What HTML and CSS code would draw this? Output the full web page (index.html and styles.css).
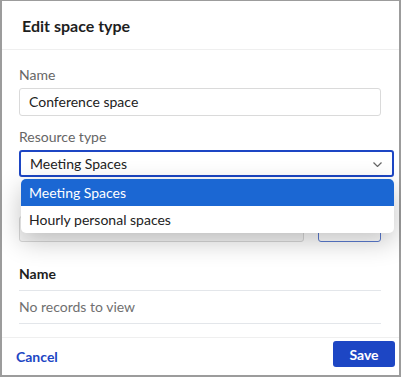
FILE: index.html
```html
<!DOCTYPE html>
<html lang="en">
<head>
    <meta charset="UTF-8">
    <meta name="viewport" content="width=device-width, initial-scale=1.0">
    <title>Edit space type</title>
    <link rel="stylesheet" href="styles.css">
</head>
<body>
    <div class="dialog">
        <div class="dialog-header">
            <h1 class="dialog-title">Edit space type</h1>
        </div>

        <div class="dialog-body">
            <div class="form-group">
                <label class="field-label">Name</label>
                <div class="text-input">Conference space</div>
            </div>

            <div class="form-group">
                <label class="field-label">Resource type</label>
                <div class="select-wrap">
                    <div class="select-box">
                        <span>Meeting Spaces</span>
                        <svg class="chevron" width="9" height="5" viewBox="0 0 9 5">
                            <path d="M0.5 0.5 L4.5 4.5 L8.5 0.5" fill="none" stroke="#666" stroke-width="1.2"/>
                        </svg>
                    </div>
                    <ul class="select-menu">
                        <li class="option selected">Meeting Spaces</li>
                        <li class="option">Hourly personal spaces</li>
                    </ul>
                </div>
            </div>

            <!-- row partly hidden behind the open menu -->
            <div class="add-row">
                <div class="add-input"></div>
                <div class="add-btn"></div>
            </div>

            <div class="records">
                <div class="records-head">Name</div>
                <div class="records-empty">No records to view</div>
            </div>
        </div>

        <div class="dialog-footer">
            <button class="cancel-btn">Cancel</button>
            <button class="save-btn">Save</button>
        </div>
    </div>
</body>
</html>
```

FILE: styles.css
```css
* {
    margin: 0;
    padding: 0;
    box-sizing: border-box;
    font-family: 'Lato', 'Noto Sans', sans-serif;
}

body {
    width: 401px;
    height: 377px;
    overflow: hidden;
    background-color: #FFFFFF;
}

.dialog {
    width: 401px;
    height: 377px;
    border: 2px solid #9C9C9C;
    border-top-width: 1px;
    display: flex;
    flex-direction: column;
    background-color: white;
}

.dialog-header {
    height: 49px;
    padding: 15px 0 0 20px;
    border-bottom: 1px solid #EFEFEF;
}

.dialog-title {
    font-size: 16px;
    font-weight: 700;
    color: #1E1E1E;
}

.dialog-body {
    flex: 1;
    padding: 16px 18px 0 17px;
}

.form-group {
    margin-bottom: 12px;
}

.field-label {
    display: block;
    font-size: 14px;
    color: #666666;
    margin-bottom: 4px;
    line-height: 18px;
}

.text-input {
    height: 28px;
    border: 1px solid #DADADA;
    border-radius: 3px;
    padding: 0 9px;
    font-size: 14px;
    line-height: 26px;
    color: #222222;
}

.select-wrap {
    position: relative;
    margin-right: -13px;
}

.select-box {
    height: 27px;
    border: 2px solid #1D46C4;
    border-radius: 3px;
    padding: 0 9px;
    font-size: 14px;
    color: #222222;
    display: flex;
    align-items: center;
    justify-content: space-between;
}

.chevron {
    margin-right: 1px;
    margin-top: 2px;
}

.select-menu {
    position: absolute;
    top: 29px;
    left: 2px;
    right: 0;
    list-style: none;
    background-color: white;
    border-radius: 5px;
    overflow: hidden;
    box-shadow: 0 8px 26px rgba(0, 0, 0, 0.24);
    z-index: 2;
}

.option {
    height: 27px;
    padding: 0 8px;
    font-size: 14px;
    line-height: 27px;
    color: #222222;
}

.option.selected {
    background-color: #1B67D3;
    color: white;
}

.add-row {
    display: flex;
    gap: 14px;
    margin-top: 39px;
}

.add-input {
    width: 285px;
    height: 26px;
    border: 1px solid #D8D8D8;
    border-radius: 3px;
    background-color: #F6F6F6;
}

.add-btn {
    width: 63px;
    height: 26px;
    border: 1px solid #5B7BD0;
    border-radius: 3px;
}

.records {
    margin-top: 23px;
}

.records-head {
    font-size: 14px;
    font-weight: 700;
    color: #1E1E1E;
    padding-bottom: 8px;
    border-bottom: 1px solid #E3E6EA;
}

.records-empty {
    font-size: 14px;
    color: #707070;
    padding: 7px 0 8px;
    border-bottom: 1px solid #E3E6EA;
}

.dialog-footer {
    height: 38px;
    border-top: 1px solid #EFEFEF;
    display: flex;
    justify-content: space-between;
    align-items: flex-start;
    padding: 3px 4px 0 14px;
}

.cancel-btn {
    background: none;
    border: none;
    color: #1D46C4;
    font-size: 14px;
    font-weight: 700;
    margin-top: 7px;
    cursor: pointer;
}

.save-btn {
    width: 62px;
    height: 26px;
    background-color: #1D46C4;
    color: white;
    border: none;
    border-radius: 3px;
    font-size: 14px;
    font-weight: 700;
    cursor: pointer;
}
```
